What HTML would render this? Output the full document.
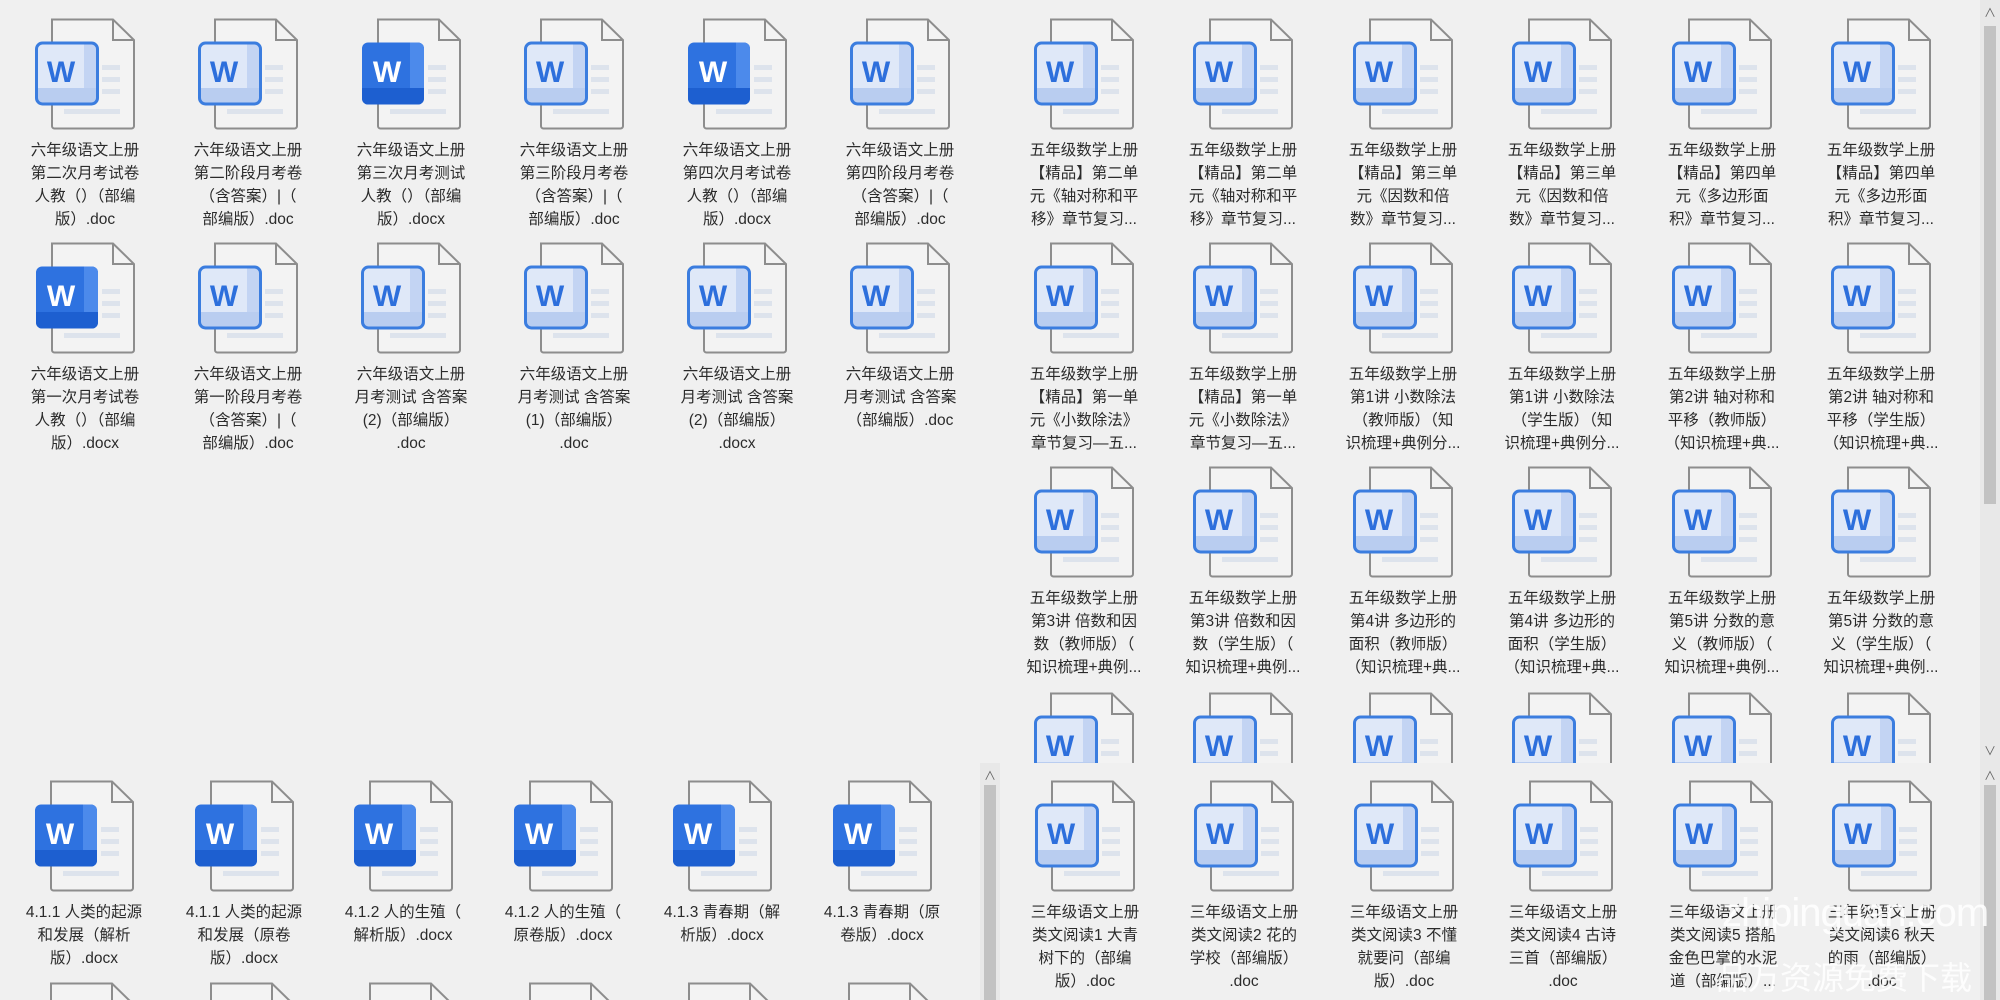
<!DOCTYPE html>
<html><head><meta charset="utf-8">
<style>
*{margin:0;padding:0;box-sizing:border-box}
html,body{width:2000px;height:1000px;overflow:hidden}
body{background:#f0f0f0;position:relative;font-family:"Liberation Sans","Noto Sans CJK SC",sans-serif}
.pane{position:absolute;overflow:hidden;background:#f0f0f0}
.c{position:absolute;width:160px}
.c svg{position:absolute;left:30px;top:0;width:100px;height:112px}
.c .t{position:absolute;left:0;top:121px;width:160px;text-align:center;font-size:15.5px;line-height:23px;color:#2b2b2b;white-space:nowrap}
.sb{position:absolute;width:20px;background:#e8e8e8}
.th{position:absolute;left:4px;width:12px;background:#c2c2c2}
.ar{position:absolute;left:0;width:20px;text-align:center;font-size:12px;color:#666}
</style></head><body>
<svg width="0" height="0" style="position:absolute">
<defs>
<symbol id="pg" viewBox="0 0 100 112">
<path d="M17 1.5 H78 L99 22 V108 a2.5 2.5 0 0 1 -2.5 2.5 H19.5 a2.5 2.5 0 0 1 -2.5 -2.5 Z" fill="#f3f3f3" stroke="#8d8d8d" stroke-width="2"/>
<path d="M78 1.5 V22 H99" fill="none" stroke="#8d8d8d" stroke-width="2"/>
<rect x="67" y="47" width="18" height="5" fill="#dde3ec"/>
<rect x="67" y="59" width="18" height="5" fill="#dde3ec"/>
<rect x="67" y="71" width="18" height="5" fill="#dde3ec"/>
<rect x="29" y="91" width="56" height="5" fill="#dde3ec"/>
</symbol>
<symbol id="lt" viewBox="0 0 100 112">
<use href="#pg"/>
<rect x="1.5" y="25" width="61" height="61" rx="6" fill="#dfe8f8"/>
<rect x="49" y="26.5" width="12" height="58" fill="#c3d4f3"/>
<rect x="3" y="70" width="58" height="14.5" fill="#b9cdf0"/>
<rect x="1.5" y="25" width="61" height="61" rx="6" fill="none" stroke="#3b7ddf" stroke-width="3"/>
<text x="26" y="64" text-anchor="middle" font-family="Liberation Sans,sans-serif" font-weight="bold" font-size="30" fill="#2d6fdc">W</text>
</symbol>
<symbol id="dk" viewBox="0 0 100 112">
<use href="#pg"/>
<rect x="1" y="24.5" width="62" height="62" rx="6" fill="#2e72e0"/>
<path d="M49 24.5 H57 a6 6 0 0 1 6 6 V70 H49 Z" fill="#4c8aeb"/>
<path d="M1 70 H63 V80.5 a6 6 0 0 1 -6 6 H7 a6 6 0 0 1 -6 -6 Z" fill="#1d5fd0"/>
<text x="26" y="64" text-anchor="middle" font-family="Liberation Sans,sans-serif" font-weight="bold" font-size="30" fill="#ffffff">W</text>
</symbol>
</defs></svg>

<!-- TOP LEFT -->
<div class="pane" style="left:0;top:0;width:1000px;height:763px">
<div class="c" style="left:5px;top:18px"><svg><use href="#lt"/></svg><div class="t">六年级语文上册<br>第二次月考试卷<br>人教（）（部编<br>版）.doc</div></div>
<div class="c" style="left:168px;top:18px"><svg><use href="#lt"/></svg><div class="t">六年级语文上册<br>第二阶段月考卷<br>（含答案）|（<br>部编版）.doc</div></div>
<div class="c" style="left:331px;top:18px"><svg><use href="#dk"/></svg><div class="t">六年级语文上册<br>第三次月考测试<br>人教（）（部编<br>版）.docx</div></div>
<div class="c" style="left:494px;top:18px"><svg><use href="#lt"/></svg><div class="t">六年级语文上册<br>第三阶段月考卷<br>（含答案）|（<br>部编版）.doc</div></div>
<div class="c" style="left:657px;top:18px"><svg><use href="#dk"/></svg><div class="t">六年级语文上册<br>第四次月考试卷<br>人教（）（部编<br>版）.docx</div></div>
<div class="c" style="left:820px;top:18px"><svg><use href="#lt"/></svg><div class="t">六年级语文上册<br>第四阶段月考卷<br>（含答案）|（<br>部编版）.doc</div></div>

<div class="c" style="left:5px;top:242px"><svg><use href="#dk"/></svg><div class="t">六年级语文上册<br>第一次月考试卷<br>人教（）（部编<br>版）.docx</div></div>
<div class="c" style="left:168px;top:242px"><svg><use href="#lt"/></svg><div class="t">六年级语文上册<br>第一阶段月考卷<br>（含答案）|（<br>部编版）.doc</div></div>
<div class="c" style="left:331px;top:242px"><svg><use href="#lt"/></svg><div class="t">六年级语文上册<br>月考测试 含答案<br>(2)（部编版）<br>.doc</div></div>
<div class="c" style="left:494px;top:242px"><svg><use href="#lt"/></svg><div class="t">六年级语文上册<br>月考测试 含答案<br>(1)（部编版）<br>.doc</div></div>
<div class="c" style="left:657px;top:242px"><svg><use href="#lt"/></svg><div class="t">六年级语文上册<br>月考测试 含答案<br>(2)（部编版）<br>.docx</div></div>
<div class="c" style="left:820px;top:242px"><svg><use href="#lt"/></svg><div class="t">六年级语文上册<br>月考测试 含答案<br>（部编版）.doc</div></div>
</div>

<!-- TOP RIGHT -->
<div class="pane" style="left:1000px;top:0;width:1000px;height:763px">
<div class="c" style="left:4px;top:18px"><svg><use href="#lt"/></svg><div class="t">五年级数学上册<br>【精品】第二单<br>元《轴对称和平<br>移》章节复习...</div></div>
<div class="c" style="left:163px;top:18px"><svg><use href="#lt"/></svg><div class="t">五年级数学上册<br>【精品】第二单<br>元《轴对称和平<br>移》章节复习...</div></div>
<div class="c" style="left:323px;top:18px"><svg><use href="#lt"/></svg><div class="t">五年级数学上册<br>【精品】第三单<br>元《因数和倍<br>数》章节复习...</div></div>
<div class="c" style="left:482px;top:18px"><svg><use href="#lt"/></svg><div class="t">五年级数学上册<br>【精品】第三单<br>元《因数和倍<br>数》章节复习...</div></div>
<div class="c" style="left:642px;top:18px"><svg><use href="#lt"/></svg><div class="t">五年级数学上册<br>【精品】第四单<br>元《多边形面<br>积》章节复习...</div></div>
<div class="c" style="left:801px;top:18px"><svg><use href="#lt"/></svg><div class="t">五年级数学上册<br>【精品】第四单<br>元《多边形面<br>积》章节复习...</div></div>

<div class="c" style="left:4px;top:242px"><svg><use href="#lt"/></svg><div class="t">五年级数学上册<br>【精品】第一单<br>元《小数除法》<br>章节复习—五...</div></div>
<div class="c" style="left:163px;top:242px"><svg><use href="#lt"/></svg><div class="t">五年级数学上册<br>【精品】第一单<br>元《小数除法》<br>章节复习—五...</div></div>
<div class="c" style="left:323px;top:242px"><svg><use href="#lt"/></svg><div class="t">五年级数学上册<br>第1讲 小数除法<br>（教师版）（知<br>识梳理+典例分...</div></div>
<div class="c" style="left:482px;top:242px"><svg><use href="#lt"/></svg><div class="t">五年级数学上册<br>第1讲 小数除法<br>（学生版）（知<br>识梳理+典例分...</div></div>
<div class="c" style="left:642px;top:242px"><svg><use href="#lt"/></svg><div class="t">五年级数学上册<br>第2讲 轴对称和<br>平移（教师版）<br>（知识梳理+典...</div></div>
<div class="c" style="left:801px;top:242px"><svg><use href="#lt"/></svg><div class="t">五年级数学上册<br>第2讲 轴对称和<br>平移（学生版）<br>（知识梳理+典...</div></div>

<div class="c" style="left:4px;top:466px"><svg><use href="#lt"/></svg><div class="t">五年级数学上册<br>第3讲 倍数和因<br>数（教师版）（<br>知识梳理+典例...</div></div>
<div class="c" style="left:163px;top:466px"><svg><use href="#lt"/></svg><div class="t">五年级数学上册<br>第3讲 倍数和因<br>数（学生版）（<br>知识梳理+典例...</div></div>
<div class="c" style="left:323px;top:466px"><svg><use href="#lt"/></svg><div class="t">五年级数学上册<br>第4讲 多边形的<br>面积（教师版）<br>（知识梳理+典...</div></div>
<div class="c" style="left:482px;top:466px"><svg><use href="#lt"/></svg><div class="t">五年级数学上册<br>第4讲 多边形的<br>面积（学生版）<br>（知识梳理+典...</div></div>
<div class="c" style="left:642px;top:466px"><svg><use href="#lt"/></svg><div class="t">五年级数学上册<br>第5讲 分数的意<br>义（教师版）（<br>知识梳理+典例...</div></div>
<div class="c" style="left:801px;top:466px"><svg><use href="#lt"/></svg><div class="t">五年级数学上册<br>第5讲 分数的意<br>义（学生版）（<br>知识梳理+典例...</div></div>

<div class="c" style="left:4px;top:692px"><svg><use href="#lt"/></svg></div>
<div class="c" style="left:163px;top:692px"><svg><use href="#lt"/></svg></div>
<div class="c" style="left:323px;top:692px"><svg><use href="#lt"/></svg></div>
<div class="c" style="left:482px;top:692px"><svg><use href="#lt"/></svg></div>
<div class="c" style="left:642px;top:692px"><svg><use href="#lt"/></svg></div>
<div class="c" style="left:801px;top:692px"><svg><use href="#lt"/></svg></div>

<div class="sb" style="left:980px;top:0;height:763px"><div class="ar" style="top:4px">&#8743;</div><div class="th" style="top:26px;height:478px"></div><div class="ar" style="top:742px">&#8744;</div></div>
</div>

<!-- BOTTOM LEFT -->
<div class="pane" style="left:0;top:763px;width:1000px;height:237px">
<div class="c" style="left:4px;top:17px"><svg><use href="#dk"/></svg><div class="t">4.1.1 人类的起源<br>和发展（解析<br>版）.docx</div></div>
<div class="c" style="left:164px;top:17px"><svg><use href="#dk"/></svg><div class="t">4.1.1 人类的起源<br>和发展（原卷<br>版）.docx</div></div>
<div class="c" style="left:323px;top:17px"><svg><use href="#dk"/></svg><div class="t">4.1.2 人的生殖（<br>解析版）.docx</div></div>
<div class="c" style="left:483px;top:17px"><svg><use href="#dk"/></svg><div class="t">4.1.2 人的生殖（<br>原卷版）.docx</div></div>
<div class="c" style="left:642px;top:17px"><svg><use href="#dk"/></svg><div class="t">4.1.3 青春期（解<br>析版）.docx</div></div>
<div class="c" style="left:802px;top:17px"><svg><use href="#dk"/></svg><div class="t">4.1.3 青春期（原<br>卷版）.docx</div></div>
<div class="c" style="left:4px;top:219px"><svg><use href="#lt"/></svg></div>
<div class="c" style="left:164px;top:219px"><svg><use href="#lt"/></svg></div>
<div class="c" style="left:323px;top:219px"><svg><use href="#lt"/></svg></div>
<div class="c" style="left:483px;top:219px"><svg><use href="#lt"/></svg></div>
<div class="c" style="left:642px;top:219px"><svg><use href="#lt"/></svg></div>
<div class="c" style="left:802px;top:219px"><svg><use href="#lt"/></svg></div>
<div class="sb" style="left:980px;top:0;height:237px"><div class="ar" style="top:4px">&#8743;</div><div class="th" style="top:22px;height:215px"></div></div>
</div>

<!-- BOTTOM RIGHT -->
<div class="pane" style="left:1000px;top:763px;width:1000px;height:237px">
<div class="c" style="left:5px;top:17px"><svg><use href="#lt"/></svg><div class="t">三年级语文上册<br>类文阅读1 大青<br>树下的（部编<br>版）.doc</div></div>
<div class="c" style="left:164px;top:17px"><svg><use href="#lt"/></svg><div class="t">三年级语文上册<br>类文阅读2 花的<br>学校（部编版）<br>.doc</div></div>
<div class="c" style="left:324px;top:17px"><svg><use href="#lt"/></svg><div class="t">三年级语文上册<br>类文阅读3 不懂<br>就要问（部编<br>版）.doc</div></div>
<div class="c" style="left:483px;top:17px"><svg><use href="#lt"/></svg><div class="t">三年级语文上册<br>类文阅读4 古诗<br>三首（部编版）<br>.doc</div></div>
<div class="c" style="left:643px;top:17px"><svg><use href="#lt"/></svg><div class="t">三年级语文上册<br>类文阅读5 搭船<br>金色巴掌的水泥<br>道（部编版）...</div></div>
<div class="c" style="left:802px;top:17px"><svg><use href="#lt"/></svg><div class="t">三年级语文上册<br>类文阅读6 秋天<br>的雨（部编版）<br>.doc</div></div>
<div class="sb" style="left:980px;top:0;height:237px"><div class="ar" style="top:4px">&#8743;</div><div class="th" style="top:22px;height:215px"></div></div>
<div style="position:absolute;left:722px;top:128px;font-size:40px;color:rgba(255,255,255,0.85);white-space:nowrap;letter-spacing:-1px">zhipinguan.com</div>
<div style="position:absolute;left:716px;top:190px;font-size:32px;color:rgba(255,255,255,0.85);white-space:nowrap">品万资源免费下载</div>
</div>
</body></html>
